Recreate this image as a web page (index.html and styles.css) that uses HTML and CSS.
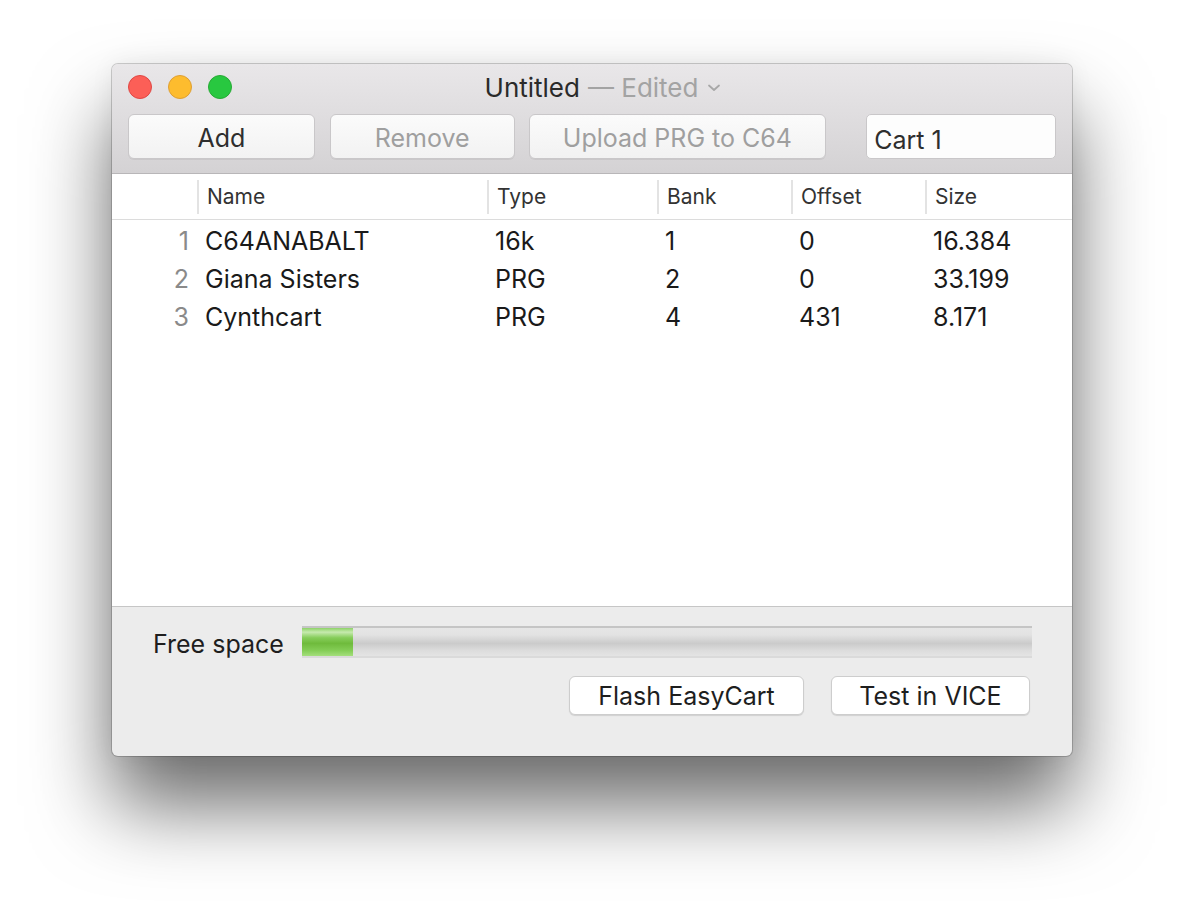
FILE: index.html
```html
<!DOCTYPE html>
<html>
<head>
<meta charset="utf-8">
<link rel="stylesheet" href="styles.css">
</head>
<body>
<div class="stage">
  <div class="window">
    <div class="chrome">
      <div class="titlebar">
        <div class="lights">
          <span class="light red"></span>
          <span class="light yellow"></span>
          <span class="light green"></span>
        </div>
        <div class="title">Untitled <span class="edited">— Edited</span>
          <svg class="chev" width="14" height="10" viewBox="0 0 14 10"><path d="M2 2.5 L7 7 L12 2.5" fill="none" stroke="#a8a8a8" stroke-width="1.8" stroke-linecap="round" stroke-linejoin="round"/></svg>
        </div>
      </div>
      <div class="toolbar">
        <button class="tbtn add">Add</button>
        <button class="tbtn remove disabled">Remove</button>
        <button class="tbtn upload disabled">Upload PRG to C64</button>
        <div class="field">Cart 1</div>
      </div>
    </div>
    <div class="table">
      <div class="thead">
        <div class="th num"></div>
        <div class="th">Name</div>
        <div class="th">Type</div>
        <div class="th">Bank</div>
        <div class="th">Offset</div>
        <div class="th">Size</div>
      </div>
      <div class="tbody">
        <div class="tr">
          <div class="td num">1</div><div class="td">C64ANABALT</div><div class="td">16k</div><div class="td">1</div><div class="td">0</div><div class="td">16.384</div>
        </div>
        <div class="tr">
          <div class="td num">2</div><div class="td">Giana Sisters</div><div class="td">PRG</div><div class="td">2</div><div class="td">0</div><div class="td">33.199</div>
        </div>
        <div class="tr">
          <div class="td num">3</div><div class="td">Cynthcart</div><div class="td">PRG</div><div class="td">4</div><div class="td">431</div><div class="td">8.171</div>
        </div>
      </div>
    </div>
    <div class="footer">
      <div class="space-row">
        <span class="label">Free space</span>
        <div class="bar"><div class="fill" style="width:51px"></div></div>
      </div>
      <div class="actions">
        <button class="btn">Flash EasyCart</button>
        <button class="btn">Test in VICE</button>
      </div>
    </div>
  </div>
</div>
</body>
</html>
```
FILE: styles.css
```css
* { box-sizing: border-box; }
html, body { margin: 0; padding: 0; background: #ffffff; }
body {
  font-family: Inter, "Noto Sans", "Liberation Sans", sans-serif;
  width: 1184px;
  height: 916px;
  overflow: hidden;
}
.stage {
  padding: 64px 0 0 112px;
}
.window {
  width: 960px;
  height: 692px;
  border-radius: 6px;
  background: #ececec;
  display: flex;
  flex-direction: column;
  overflow: hidden;
  box-shadow: 0 0 0 1px rgba(0,0,0,0.18), 0 50px 80px rgba(0,0,0,0.58), 0 0 24px rgba(0,0,0,0.06);
}
.chrome {
  height: 110px;
  background: linear-gradient(#e9e7e9, #d4d2d4);
  border-bottom: 1px solid #b8b6b8;
  display: flex;
  flex-direction: column;
}
.titlebar {
  height: 46px;
  position: relative;
  display: flex;
  align-items: center;
  justify-content: center;
}
.lights {
  position: absolute;
  left: 16px;
  top: 11px;
  display: flex;
  gap: 16px;
}
.light {
  width: 24px;
  height: 24px;
  border-radius: 50%;
  display: block;
}
.red { background: #fc5f57; border: 1px solid #df4744; }
.yellow { background: #fdbc2e; border: 1px solid #de9f34; }
.green { background: #28c840; border: 1px solid #27aa35; }
.title {
  font-size: 26px;
  color: #2a2a2a;
  margin-top: 0;
  margin-left: 22px;
  display: flex;
  align-items: center;
  gap: 8px;
}
.edited { color: #a3a3a3; }
.chev { margin-left: 1px; margin-top: 2px; }
.toolbar {
  display: flex;
  align-items: center;
  padding: 5px 16px 0 16px;
  height: 48px;
}
.tbtn {
  font-family: inherit;
  height: 45px;
  font-size: 25px;
  border-radius: 6px;
  border: 1px solid #c9c7c9;
  background: linear-gradient(#fbfbfb, #f2f2f2);
  box-shadow: 0 1px 0 rgba(0,0,0,0.06);
  color: #2e2e2e;
  padding: 3px 0 0 0;
}
.tbtn.disabled { color: #9f9f9f; }
.add { width: 187px; }
.remove { width: 185px; margin-left: 15px; }
.upload { width: 298px; margin-left: 14px; }
.field {
  width: 190px;
  height: 45px;
  margin-left: 40px;
  border: 1px solid #c9c7c9;
  border-radius: 5px;
  background: #fdfdfd;
  font-size: 25px;
  color: #2e2e2e;
  padding: 10px 0 0 7px;
}
.table {
  background: #ffffff;
  flex: 1;
  border-bottom: 1px solid #c6c6c6;
  display: flex;
  flex-direction: column;
}
.thead, .tr {
  display: grid;
  grid-template-columns: 85px 290px 170px 134px 134px 1fr;
}
.thead {
  height: 46px;
  border-bottom: 1px solid #dcdcdc;
  align-items: center;
}
.th {
  font-size: 21px;
  color: #333;
  height: 34px;
  display: flex;
  align-items: center;
  padding-left: 8px;
  border-left: 2px solid #e3e3e3;
}
.th.num { border-left: none; }
.tbody { padding-top: 2px; }
.tr { height: 38px; align-items: center; }
.td {
  font-size: 25px;
  color: #1a1a1a;
  padding-left: 8px;
}
.td.num {
  text-align: right;
  color: #8a8a8a;
  padding-left: 0;
  padding-right: 8px;
}
.footer {
  height: 149px;
  display: flex;
  flex-direction: column;
  padding: 19px 40px 0 41px;
}
.space-row {
  display: flex;
  align-items: center;
  height: 32px;
}
.label {
  font-size: 25px;
  color: #1e1e1e;
  width: 149px;
  padding-top: 4px;
}
.bar {
  flex: 1;
  height: 32px;
  border-top: 2px solid #c5c5c5;
  border-bottom: 2px solid #dadada;
  background: linear-gradient(#e6e6e6 0%, #e2e2e2 25%, #cbcbcb 55%, #dcdcdc 80%, #e4e4e4 100%);
}
.fill {
  height: 100%;
  background: linear-gradient(#8ed268 0%, #c6eaae 15%, #86cd5a 35%, #6fbb3c 55%, #84cd56 80%, #a4df7c 100%);
}
.actions {
  display: flex;
  justify-content: flex-end;
  gap: 27px;
  margin-top: 18px;
  padding-right: 2px;
}
.btn {
  font-family: inherit;
  height: 39px;
  font-size: 25px;
  color: #1e1e1e;
  background: #ffffff;
  border: 1px solid #cdcdcd;
  border-radius: 6px;
  box-shadow: 0 1px 1px rgba(0,0,0,0.12);
  padding: 0;
}
.btn:first-child { width: 235px; }
.btn:last-child { width: 199px; }
```
